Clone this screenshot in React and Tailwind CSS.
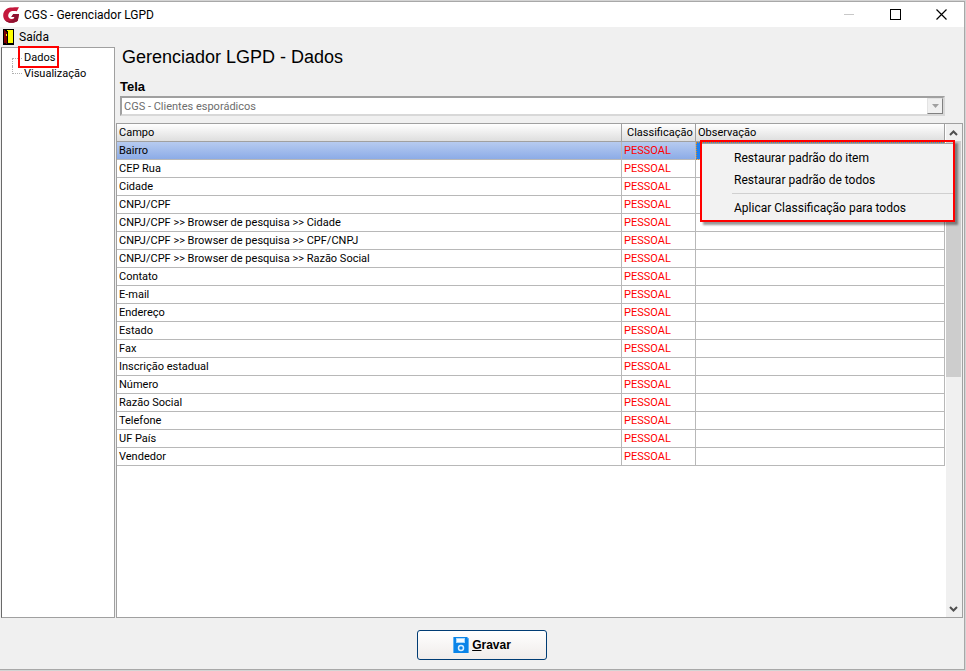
import React from 'react';

const rows = [
  'Bairro',
  'CEP Rua',
  'Cidade',
  'CNPJ/CPF',
  'CNPJ/CPF >> Browser de pesquisa >> Cidade',
  'CNPJ/CPF >> Browser de pesquisa >> CPF/CNPJ',
  'CNPJ/CPF >> Browser de pesquisa >> Razão Social',
  'Contato',
  'E-mail',
  'Endereço',
  'Estado',
  'Fax',
  'Inscrição estadual',
  'Número',
  'Razão Social',
  'Telefone',
  'UF País',
  'Vendedor',
];

const Logo = () => (
  <svg width="16" height="16" viewBox="0 0 16 16" aria-hidden="true">
    <path d="M16 0.300L13.800 4.300C10.500 3.600 8 3.800 6.400 5.400 4.600 7.300 4.900 10.300 6.800 11.400 8.200 12.200 10 12 11.200 11.300L11.500 9.900H8.300L10.300 7H16L14.800 13.800C12.500 15.500 9.500 16.200 6.500 15.700 2.500 15 0 12 0.200 8.200 0.400 4 3.500 1 7.500 0.600 10.500 0.300 13 0.500 16 0.300Z" fill="#c4183c" />
    <path d="M8.300 9.900L10.300 7H16L14.800 13.800C12.500 15.500 9.500 16.200 6.500 15.700 4.500 15.300 3 14.300 2 13 5 14.500 9 14.200 11.200 11.300L11.500 9.900Z" fill="#8e1230" />
  </svg>
);

const DoorIcon = () => (
  <svg width="11" height="16" viewBox="0 0 11 16" shapeRendering="crispEdges" aria-hidden="true">
    <rect width="11" height="16" fill="#000" />
    <rect x="1" y="1" width="9" height="13" fill="#ff0" />
    <path d="M1 1h1v1h1v1h1v12h-1v-1h-2z" fill="#800000" />
    <path d="M2 1h2v2h-1v-1h-1zM4 2h1v13h-1z" fill="#000" />
    <rect x="3" y="5" width="1" height="2" fill="#ff0" />
  </svg>
);

const SaveIcon = () => (
  <svg width="16" height="16" viewBox="0 0 16 16" aria-hidden="true">
    <path d="M0 0h14l2 2v14H0z" fill="#0a84e8" />
    <path d="M0 0h1v16H0zM14 0l2 2v14h-1V3z" fill="#5cb2f5" />
    <rect x="3" y="1" width="9" height="5" fill="#a8d8fb" />
    <rect x="4" y="2" width="7" height="3" fill="#f4faff" />
    <circle cx="8" cy="11" r="2.500" fill="none" stroke="#d8efff" strokeWidth="1.500" />
  </svg>
);

const Chevron = ({ down }) => (
  <svg width="9" height="6" viewBox="0 0 9 6" aria-hidden="true">
    <path d={down ? 'M1 1l3.500 3.500L8 1' : 'M1 5l3.500-3.500L8 5'} fill="none" stroke="#505050" strokeWidth="2" />
  </svg>
);

const TitleBar = () => (
  <header className="flex h-[25px] items-center bg-white pl-[3px] text-xs">
    <Logo />
    <span className="ml-[5px] flex-1">CGS - Gerenciador LGPD</span>
    <button className="flex h-full w-[46px] items-center justify-center" aria-label="Minimizar">
      <span className="h-px w-2.5 bg-[#c8c8c8]" />
    </button>
    <button className="flex h-full w-[46px] items-center justify-center" aria-label="Maximizar">
      <span className="h-[11px] w-[11px] border border-black" />
    </button>
    <button className="flex h-full w-[46px] items-center justify-center" aria-label="Fechar">
      <svg width="11" height="11" viewBox="0 0 11 11">
        <path d="M0.500 0.500l10 10M10.500 0.500l-10 10" stroke="#000" strokeWidth="1.200" />
      </svg>
    </button>
  </header>
);

const TreeNav = () => (
  <nav className="w-[114px] shrink-0 border border-[#a0a0a0] border-l-[#696969] bg-white pt-0.5 pl-[10px] text-[11px] leading-4">
    <ul>
      <li className="flex h-4">
        <span className="h-2 w-2.5 self-end border-t border-l border-dotted border-[#b0b0b0]" />
        <button className="relative pl-0.5">
          Dados
          <span className="absolute -inset-x-1 -top-1 -bottom-0.5 border-2 border-[#f00]" />
        </button>
      </li>
      <li className="flex h-4">
        <span className="h-2 w-2.5 border-b border-l border-dotted border-[#b0b0b0]" />
        <button className="pl-0.5">Visualização</button>
      </li>
    </ul>
  </nav>
);

const ContextMenu = () => (
  <div className="absolute top-4 right-[7px] w-[255px] border-2 border-[#f00] pt-px text-xs shadow-[3px_3px_2px_rgba(0,0,0,0.4)]">
    <div role="menu" className="border-t border-[#a0a0a0] bg-[#f2f2f2] pt-[3px] pb-px">
      <button role="menuitem" className="block h-[22px] w-full pl-8 text-left">Restaurar padrão do item</button>
      <button role="menuitem" className="block h-[22px] w-full pl-8 text-left">Restaurar padrão de todos</button>
      <hr className="mt-0.5 mb-[3px] ml-[30px] border-[#d0d0d0]" />
      <button role="menuitem" className="block h-[22px] w-full pl-8 text-left">Aplicar Classificação para todos</button>
    </div>
  </div>
);

const Grid = () => (
  <table className="w-full table-fixed border-separate border-spacing-0 text-[11px] leading-4">
    <thead>
      <tr className="h-[18px] bg-linear-to-b from-white to-[#dcdcdc] text-left">
        <th className="border-r border-b border-[#a0a0a0] px-0.5 pt-px pb-0 font-normal">Campo</th>
        <th className="w-[74px] border-r border-b border-[#a0a0a0] pt-px pr-0 pb-0 pl-[5px] font-normal">Classificação</th>
        <th className="w-[249px] border-r border-b border-[#a0a0a0] px-0.5 pt-px pb-0 font-normal">Observação</th>
      </tr>
    </thead>
    <tbody>
      {rows.map((name, i) => (
        <tr key={name} className={i === 0 ? 'h-[18px] bg-linear-to-b from-[#b7cbf0] to-[#8aaae6]' : 'h-[18px]'}>
          <td className="border-r border-b border-[#b8b8b8] px-0.5 pt-px pb-0">{name}</td>
          <td className="border-r border-b border-[#b8b8b8] px-0.5 pt-px pb-0 text-[#f00]">PESSOAL</td>
          <td
            className={
              i === 0
                ? 'border-r border-b border-[#b8b8b8] bg-[#1e80f0] p-0 outline-1 -outline-offset-1 outline-[#e08a20] outline-dotted'
                : 'border-r border-b border-[#b8b8b8] p-0'
            }
          />
        </tr>
      ))}
    </tbody>
  </table>
);

const ScrollBar = () => (
  <div className="ml-px flex w-4 flex-col bg-[#f0f0f0]">
    <button className="flex h-[17px] w-[15px] items-center justify-center" aria-label="Rolar para cima">
      <Chevron />
    </button>
    <div className="h-[236px] w-[15px] bg-[#cdcdcd]" />
    <div className="flex-1" />
    <button className="flex h-[17px] w-[15px] items-center justify-center" aria-label="Rolar para baixo">
      <Chevron down />
    </button>
  </div>
);

export default function App() {
  return (
    <div className="flex min-h-screen flex-col border-t border-r border-b border-[#d4d4d4] font-[Roboto,sans-serif] text-black">
      <div className="flex flex-1 flex-col border-t border-r border-b border-[#a8a8a8] bg-[#f0f0f0]">
        <TitleBar />
        <div className="flex h-5 items-center pl-[3px] text-xs">
          <button className="flex items-center gap-[5px]">
            <DoorIcon />
            Saída
          </button>
        </div>
        <div className="flex flex-1 pl-px">
          <TreeNav />
          <main className="flex min-w-0 flex-1 flex-col pr-px pl-px">
            <div className="pr-[18px] pl-1">
              <h1 className="pl-0.5 font-['Liberation_Sans',Arial,sans-serif] text-lg leading-5">Gerenciador LGPD - Dados</h1>
              <label htmlFor="tela" className="mt-3 block font-['Liberation_Sans',Arial,sans-serif] text-[13px] leading-4 font-bold">
                Tela
              </label>
              <div className="relative mt-px">
                <select
                  id="tela"
                  disabled
                  className="block h-5 w-full appearance-none border-2 border-[#a0a0a0] border-r-[#d8d8d8] border-b-[#d8d8d8] bg-white pt-px pl-0.5 text-[11px] text-[#6d6d6d] opacity-100"
                >
                  <option>CGS - Clientes esporádicos</option>
                </select>
                <span className="pointer-events-none absolute top-0.5 right-0.5 flex h-4 w-4 items-center justify-center border border-[#e3e3e3] border-r-[#808080] border-b-[#808080] bg-[#f0f0f0]">
                  <svg width="7" height="4" viewBox="0 0 7 4">
                    <path d="M0 0h7L3.500 4z" fill="#a0a0a0" />
                  </svg>
                </span>
              </div>
            </div>
            <div className="relative mt-[7px] flex flex-1 border border-[#a0a0a0] bg-white">
              <div className="min-w-0 flex-1">
                <Grid />
              </div>
              <ScrollBar />
              <ContextMenu />
            </div>
          </main>
        </div>
        <footer className="flex h-[51px] items-center justify-center pt-0.5">
          <button className="flex h-[30px] w-[130px] items-center justify-center gap-[3px] rounded-[3px] border border-[#003c74] bg-linear-to-b from-white to-[#f0ecea] font-['Liberation_Sans',Arial,sans-serif] text-xs font-bold">
            <SaveIcon />
            <span>
              <u>G</u>ravar
            </span>
          </button>
        </footer>
      </div>
    </div>
  );
}
